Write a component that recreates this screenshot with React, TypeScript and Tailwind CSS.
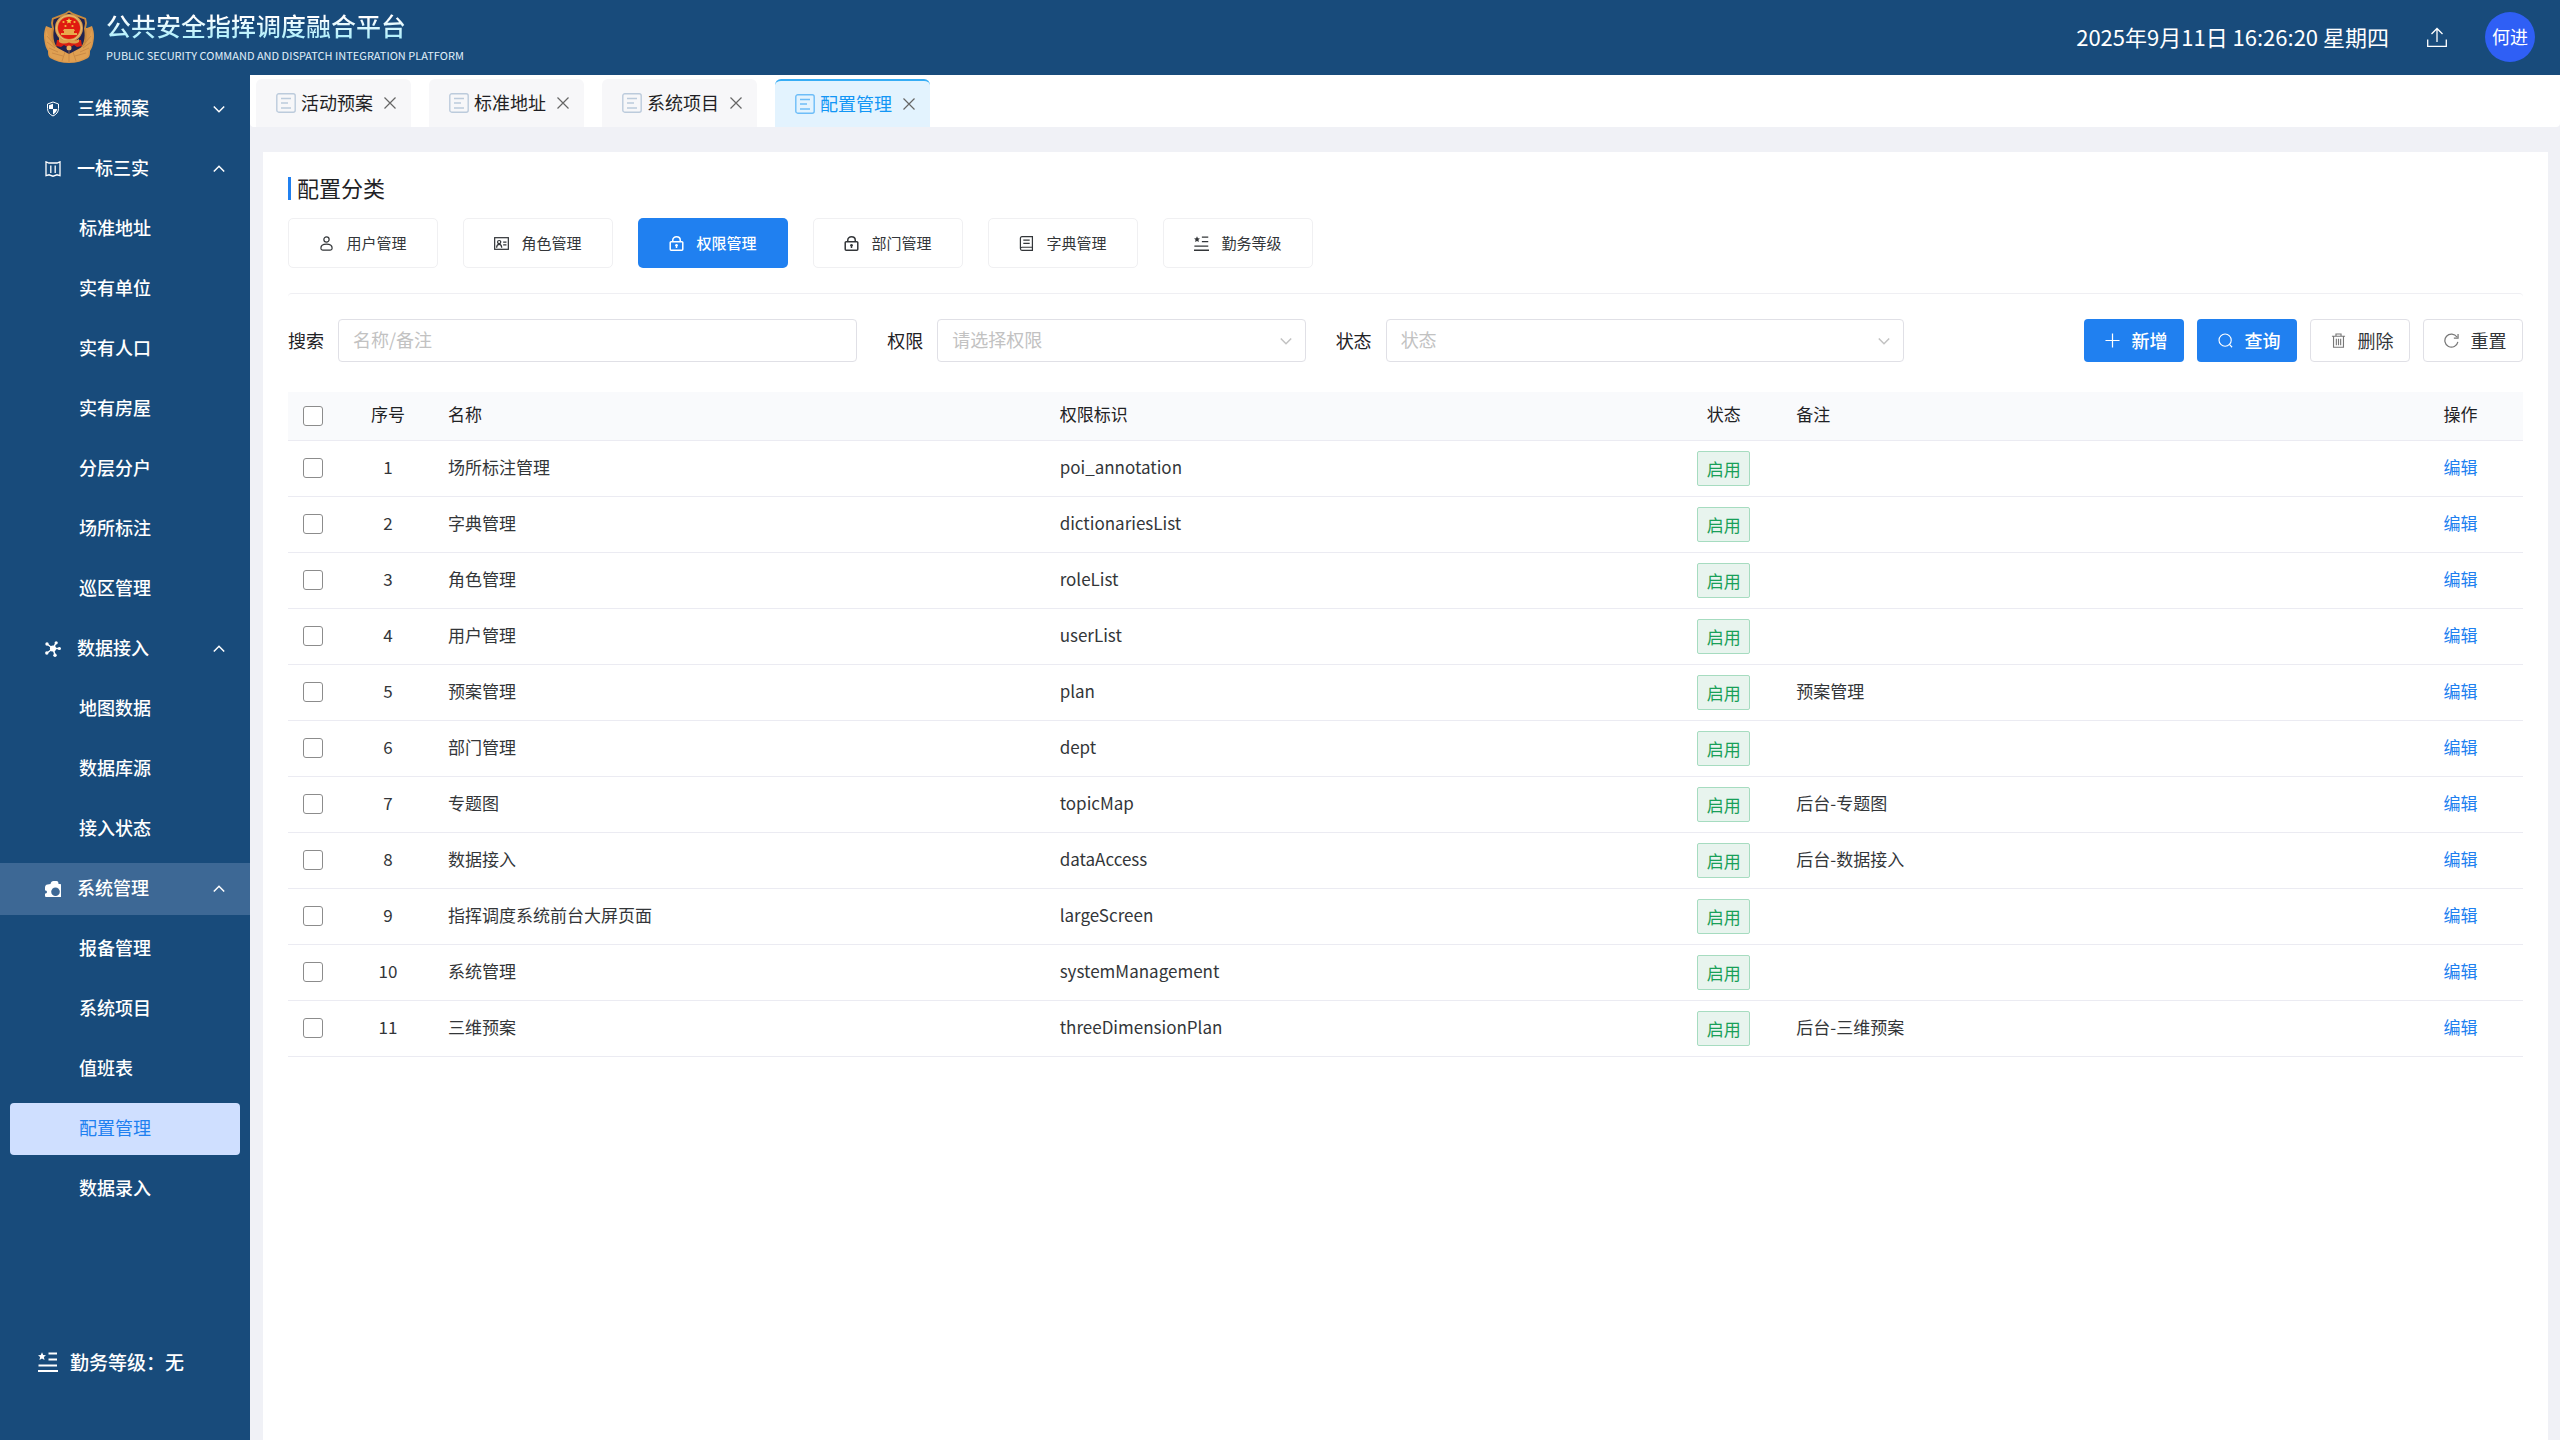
import type { ReactNode } from 'react'
import clsx from 'clsx'

type IconProps = { className?: string }

function Emblem({ className }: IconProps) {
  return (
    <svg viewBox="0 0 50 53" className={className} aria-hidden="true">
      <path d="M2 16c-2 5-2.500 10-1.500 15 .5 4 1.500 7 3.500 10 0 3 0 5 2 7 5 3 12 5 19 5s14-2 19-5c2-2 2-4 2-7 2-3 3-6 3.500-10 1-5 .5-10-1.500-15l-5 2H7z" fill="#d9964a" />
      <path d="M25 0.500 29 3l13 5 1 5-1 5c2 12-1 20-6 24l-11 6-11-6C9 38 6 30 8 18l-1-5 1-5 13-5z" fill="#c98a3e" />
      <path d="M25 2.500 29 5l11.500 4.500.5 4-1 5c2 10-1 18-5.500 21.500L25 45l-9.500-5C11 36.500 8 28.500 10 18.500l-1-5 .5-4L21 5z" fill="#1f2350" />
      <path d="M2 20c3 6 4 12 8 16l15 8 15-8c4-4 5-10 8-16 1 8 0 15-3 20-1 3 0 5-2 7-5 3-11 5-18 5s-13-2-18-5c-2-2-1-4-2-7-3-5-4-12-3-20z" fill="#e0a052" />
      <path d="M3 26l6 7M3 32l8 6M5 38l9 4M8 43l11 3M47 26l-6 7M47 32l-8 6M45 38l-9 4M42 43l-11 3M25 41v11M21 42l-3 9M29 42l3 9" stroke="#c08040" strokeWidth="0.700" />
      <path d="M13 30h24l1 6-5 1-3-2-5 3-5-3-3 2-5-1z" fill="#d81e12" />
      <circle cx="25" cy="18" r="14" fill="#d49a4c" />
      <circle cx="25" cy="18" r="12.500" fill="none" stroke="#f0bd72" strokeWidth="1" />
      <circle cx="25" cy="18" r="11" fill="#e01a10" />
      <path d="M25 8l.9 1.900 2.100.2-1.600 1.400.5 2.100-1.900-1.100-1.900 1.100.5-2.100L22 10.100l2.100-.2z" fill="#f5cf4e" />
      <circle cx="19.500" cy="12" r="1.100" fill="#f5b93e" />
      <circle cx="30.500" cy="12" r="1.100" fill="#f5b93e" />
      <circle cx="21.500" cy="16" r="1.100" fill="#f5b93e" />
      <circle cx="28.500" cy="16" r="1.100" fill="#f5b93e" />
      <path d="M20 19h10l1 2h-1v2h3v2H17v-2h3v-2h-1z" fill="#e8a94c" />
      <path d="M15 27c3 4 7 4 10 2 3 2 7 2 10 0v3c-3 2-7 2-10 .5-3 1.500-7 1.500-10-.5z" fill="#dda04c" />
      <circle cx="25" cy="38" r="2.500" fill="#e9b060" />
    </svg>
  )
}

function ShieldIcon({ className }: IconProps) {
  return (
    <svg viewBox="0 0 16 16" className={className} aria-hidden="true">
      <path d="M8 1 13.500 3v4.500c0 3.500-2.200 6-5.500 7.500-3.300-1.500-5.500-4-5.500-7.500V3z" fill="none" stroke="currentColor" strokeWidth="1" />
      <path d="M8 2.800V8H4V4.200zM8 8h4.200c-.4 2.600-2 4.400-4.200 5.600z" fill="currentColor" />
    </svg>
  )
}

function MapIcon({ className }: IconProps) {
  return (
    <svg viewBox="0 0 16 16" className={className} fill="none" stroke="currentColor" strokeWidth="1.300" aria-hidden="true">
      <path d="M1 .8 4 2h8l3-1.200v13.800l-3-.8-4 1.400-4-1.400-3 .8z" />
      <path d="M5.800 4.500v7.500M10.200 4.500v7.500" />
    </svg>
  )
}

function HubIcon({ className }: IconProps) {
  return (
    <svg viewBox="0 0 16 16" className={className} fill="currentColor" aria-hidden="true">
      <path d="M8 7.500 2 3M8 7.500 11 1.800M8 7.500h6.500M8 7.500 2 12M8 7.500l2 6.500" stroke="currentColor" strokeWidth="1.500" />
      <circle cx="8" cy="7.500" r="3.100" />
      <circle cx="2" cy="3" r="1.700" />
      <circle cx="11.200" cy="1.800" r="1.600" />
      <circle cx="14.400" cy="7.500" r="1.600" />
      <circle cx="1.800" cy="12" r="1.700" />
      <circle cx="10" cy="14.200" r="1.700" />
    </svg>
  )
}

function SystemIcon({ className }: IconProps) {
  return (
    <svg viewBox="0 0 16 16" className={className} aria-hidden="true">
      <path d="M5.500 3c.3-2 1.500-3 3-3h3c1.500 0 2 1 2 3h1.500c1 0 1 .5 1 1.500V16H1.500C.5 16 0 15.500 0 14.500v-2c1.500 0 2-.6 2-1.500s-.5-1.500-2-1.500v-3C0 5 .8 3.500 2.500 3.500z" fill="currentColor" />
      <circle cx="10.500" cy="10.800" r="4.300" fill="#3d6895" />
    </svg>
  )
}

function LevelIcon({ className }: IconProps) {
  return (
    <svg viewBox="0 0 20 20" className={className} aria-hidden="true">
      <path d="M4 0.300 5.200 2.900l2.800.3-2.100 1.900.6 2.900L4 6.500 1.500 8l.6-2.900L0 3.200l2.800-.3z" fill="currentColor" />
      <path d="M10.500 1.500H19M10.500 7.500H19M.5 13.500h18.500M0 19h20" stroke="currentColor" strokeWidth="1.800" />
    </svg>
  )
}

function UserIcon({ className }: IconProps) {
  return (
    <svg viewBox="0 0 16 16" className={className} fill="none" stroke="currentColor" strokeWidth="1.300" aria-hidden="true">
      <circle cx="8" cy="3.700" r="2.800" />
      <path d="M8 8.700c3.500 0 6 1.800 6 4.300 0 1.400-.8 2-2 2H4c-1.200 0-2-.6-2-2 0-2.500 2.500-4.300 6-4.300z" />
    </svg>
  )
}

function RoleIcon({ className }: IconProps) {
  return (
    <svg viewBox="0 0 16 16" className={className} fill="none" stroke="currentColor" strokeWidth="1.300" aria-hidden="true">
      <rect x="0.700" y="1.800" width="14.600" height="12.400" />
      <circle cx="5.500" cy="6.500" r="1.700" />
      <path d="M2.800 12.500c0-2 1-3.500 2.700-3.500s2.700 1.500 2.700 3.500M9.800 6.500h3.500M9.800 9.500h3.500" />
    </svg>
  )
}

function LockIcon({ className }: IconProps) {
  return (
    <svg viewBox="0 0 16 16" className={className} fill="none" stroke="currentColor" strokeWidth="1.600" aria-hidden="true">
      <rect x="1.300" y="6" width="13.400" height="9.200" rx="1" />
      <path d="M4 6V4.500C4 2.300 5.700.8 8 .8s4 1.500 4 3.700V6" />
      <path d="M8 9.800v3" />
      <circle cx="8" cy="9.800" r="1.400" fill="currentColor" stroke="none" />
    </svg>
  )
}

function BookIcon({ className }: IconProps) {
  return (
    <svg viewBox="0 0 16 16" className={className} fill="none" stroke="currentColor" strokeWidth="1.300" aria-hidden="true">
      <path d="M14.300 12V.7H3.200C2.200.7 1.500 1.400 1.500 2.400v11c0 1 .7 1.900 1.700 1.900h11.100V12H3.200c-1 0-1.700.7-1.700 1.600M4.600 4.300h6.800M4.600 7.800h6.800" />
    </svg>
  )
}

function PageIcon({ className }: IconProps) {
  return (
    <svg viewBox="0 0 20 20" className={className} fill="none" stroke="currentColor" strokeWidth="1.400" aria-hidden="true">
      <rect x="0.800" y="0.800" width="18.400" height="18.400" rx="2" />
      <path d="M5 5.500h10M5 10h7M5 15h10" />
    </svg>
  )
}

function CloseIcon({ className }: IconProps) {
  return (
    <svg viewBox="0 0 12 12" className={className} stroke="currentColor" strokeWidth="1.200" aria-hidden="true">
      <path d="M.5.5l11 11M11.500.5l-11 11" />
    </svg>
  )
}

function Chevron({ className }: IconProps) {
  return (
    <svg viewBox="0 0 12 12" className={className} fill="none" stroke="currentColor" strokeWidth="1.500" aria-hidden="true">
      <path d="M.8 3.500 6 8.700l5.200-5.200" />
    </svg>
  )
}

function UploadIcon({ className }: IconProps) {
  return (
    <svg viewBox="0 0 20 20" className={className} fill="none" stroke="currentColor" strokeWidth="1.300" aria-hidden="true">
      <path d="M10 15V1.500M4.500 7 10 1.500 15.500 7M.7 12.500v6.800h18.600v-6.800" />
    </svg>
  )
}

function PlusIcon({ className }: IconProps) {
  return (
    <svg viewBox="0 0 16 16" className={className} stroke="currentColor" strokeWidth="1.300" aria-hidden="true">
      <path d="M8 .5v15M.5 8h15" />
    </svg>
  )
}

function SearchIcon({ className }: IconProps) {
  return (
    <svg viewBox="0 0 16 16" className={className} fill="none" stroke="currentColor" strokeWidth="1.200" aria-hidden="true">
      <circle cx="7.600" cy="7.600" r="6.500" />
      <path d="m12.200 12.200 2.800 3" />
    </svg>
  )
}

function TrashIcon({ className }: IconProps) {
  return (
    <svg viewBox="0 0 16 16" className={className} fill="none" stroke="currentColor" strokeWidth="1.200" aria-hidden="true">
      <path d="M1 3.500h14M5.300 3.300V1h5.400v2.300M2.700 3.500v11.700h10.600V3.500M5.700 6v7M8 6v7M10.300 6v7" />
    </svg>
  )
}

function ResetIcon({ className }: IconProps) {
  return (
    <svg viewBox="0 0 16 16" className={className} fill="none" stroke="currentColor" strokeWidth="1.300" aria-hidden="true">
      <path d="M14.800 9.500A7 7 0 1 1 13.800 4.300M15 1v4.500h-4.500" />
    </svg>
  )
}

type MenuGroup = {
  label: string
  icon: ReactNode
  open: boolean
  active?: boolean
  children: string[]
}

const menu: MenuGroup[] = [
  { label: '三维预案', icon: <ShieldIcon className="size-4" />, open: false, children: [] },
  {
    label: '一标三实',
    icon: <MapIcon className="size-4" />,
    open: true,
    children: ['标准地址', '实有单位', '实有人口', '实有房屋', '分层分户', '场所标注', '巡区管理'],
  },
  {
    label: '数据接入',
    icon: <HubIcon className="size-4" />,
    open: true,
    children: ['地图数据', '数据库源', '接入状态'],
  },
  {
    label: '系统管理',
    icon: <SystemIcon className="size-4" />,
    open: true,
    active: true,
    children: ['报备管理', '系统项目', '值班表', '配置管理', '数据录入'],
  },
]

const tabs = ['活动预案', '标准地址', '系统项目', '配置管理']

const categories = [
  { label: '用户管理', icon: <UserIcon className="size-[15px]" /> },
  { label: '角色管理', icon: <RoleIcon className="size-[15px]" /> },
  { label: '权限管理', icon: <LockIcon className="size-[15px]" /> },
  { label: '部门管理', icon: <LockIcon className="size-[15px]" /> },
  { label: '字典管理', icon: <BookIcon className="size-[15px]" /> },
  { label: '勤务等级', icon: <LevelIcon className="size-[15px]" /> },
]

const rows = [
  { name: '场所标注管理', key: 'poi_annotation', remark: '' },
  { name: '字典管理', key: 'dictionariesList', remark: '' },
  { name: '角色管理', key: 'roleList', remark: '' },
  { name: '用户管理', key: 'userList', remark: '' },
  { name: '预案管理', key: 'plan', remark: '预案管理' },
  { name: '部门管理', key: 'dept', remark: '' },
  { name: '专题图', key: 'topicMap', remark: '后台-专题图' },
  { name: '数据接入', key: 'dataAccess', remark: '后台-数据接入' },
  { name: '指挥调度系统前台大屏页面', key: 'largeScreen', remark: '' },
  { name: '系统管理', key: 'systemManagement', remark: '' },
  { name: '三维预案', key: 'threeDimensionPlan', remark: '后台-三维预案' },
]

function Header() {
  return (
    <header className="flex h-[75px] items-center bg-[#184b7b] pr-[25px] pb-[2px] pl-11 text-white">
      <Emblem className="h-[53px] w-[50px] shrink-0" />
      <div className="ml-3">
        <h1 className="bg-linear-to-b from-white from-30% to-[#b4f0fc] to-80% bg-clip-text text-[25px] leading-9 font-medium text-transparent">
          公共安全指挥调度融合平台
        </h1>
        <p className="text-[11px] leading-6 text-[#e0f0fa]">PUBLIC SECURITY COMMAND AND DISPATCH INTEGRATION PLATFORM</p>
      </div>
      <time className="ml-auto pb-[2px] text-[22px] leading-8">2025年9月11日 16:26:20 星期四</time>
      <button type="button" aria-label="上传" className="ml-[38px]">
        <UploadIcon className="size-5" />
      </button>
      <button type="button" className="ml-[38px] size-[50px] rounded-full bg-[#2f5ff5] pb-[2px] text-lg leading-none">
        何进
      </button>
    </header>
  )
}

function Sidebar() {
  return (
    <aside className="flex w-[250px] shrink-0 flex-col bg-[#184b7b] pt-2 pb-[50px] text-lg text-white">
      <nav className="flex flex-col gap-2">
        {menu.map((group) => (
          <div key={group.label} className="flex flex-col gap-2">
            <button
              type="button"
              aria-expanded={group.open}
              className={clsx('flex h-[52px] items-center pr-[25px] pl-[45px] font-medium', group.active && 'bg-[#3d6895]')}
            >
              {group.icon}
              <span className="ml-4 pb-1 leading-6">{group.label}</span>
              <Chevron className={clsx('ml-auto size-3', group.open && 'rotate-180')} />
            </button>
            {group.children.map((child) => (
              <a
                key={child}
                href="#"
                className={clsx(
                  'mx-[10px] flex h-[52px] items-center rounded pb-1 pl-[69px] leading-6',
                  child === '配置管理' ? 'bg-[#cfdfff] text-[#2080f0]' : 'font-medium',
                )}
              >
                {child}
              </a>
            ))}
          </div>
        ))}
      </nav>
      <div className="mt-auto flex h-[52px] items-center gap-3 pb-1 pl-[38px] text-[19px] font-medium">
        <LevelIcon className="size-5" />
        勤务等级：无
      </div>
    </aside>
  )
}

function TabBar() {
  return (
    <div className="flex h-[52px] items-end gap-[18px] rounded-b bg-white pl-[6px]">
      {tabs.map((tab) => {
        const active = tab === '配置管理'
        return (
          <div
            key={tab}
            className={clsx(
              'flex h-12 items-center rounded-t-md pr-[15px] pl-5 text-lg',
              active ? 'border-t-2 border-[#36adf5] bg-[#e3f3fe] text-[#1296f5]' : 'bg-[#f7f7f9] text-[#1f1f24]',
            )}
          >
            <PageIcon className={clsx('size-5', active ? 'text-[#6dbdf8]' : 'text-[#bccbdc]')} />
            <a href="#" className="ml-[5px] pb-[2px] leading-6">{tab}</a>
            <button type="button" aria-label={`关闭${tab}`} className="ml-[11px] text-[#666]">
              <CloseIcon className="size-3" />
            </button>
          </div>
        )
      })}
    </div>
  )
}

function SelectField({ id, label, placeholder, className }: { id: string; label: string; placeholder: string; className: string }) {
  return (
    <div className={clsx('flex items-center gap-[14px]', className)}>
      <label htmlFor={id} className="shrink-0 pb-[2px]">{label}</label>
      <div className="relative min-w-0 flex-1">
        <select
          id={id}
          defaultValue=""
          className="block h-[43px] w-full appearance-none rounded border border-[#e0e0e6] bg-white px-[14px] pb-1 leading-6 text-[#c2c2c2]"
        >
          <option value="">{placeholder}</option>
        </select>
        <Chevron className="pointer-events-none absolute top-4 right-[14px] size-3 text-[#c2c2c2]" />
      </div>
    </div>
  )
}

function ActionButton({ icon, primary, children }: { icon: ReactNode; primary?: boolean; children: ReactNode }) {
  return (
    <button
      type="button"
      className={clsx(
        'flex h-[43px] w-[100px] items-center justify-center gap-3 rounded pl-1',
        primary ? 'bg-[#2080f0] font-medium text-white' : 'border border-[#e0e0e6] text-[#333639]',
      )}
    >
      {icon}
      <span className="pb-[2px]">{children}</span>
    </button>
  )
}

function FilterBar() {
  return (
    <div className="flex items-center text-lg leading-6 text-[#1f2225]">
      <form className="flex flex-1 gap-[30px] pr-[180px]">
        <div className="flex flex-[569] items-center gap-[14px]">
          <label htmlFor="keyword" className="shrink-0 pb-[2px]">搜索</label>
          <input
            id="keyword"
            type="text"
            placeholder="名称/备注"
            className="h-[43px] min-w-0 flex-1 rounded border border-[#e0e0e6] px-[14px] pb-1 placeholder:text-[#c2c2c2]"
          />
        </div>
        <SelectField id="permission" label="权限" placeholder="请选择权限" className="flex-[418]" />
        <SelectField id="status" label="状态" placeholder="状态" className="flex-[568]" />
      </form>
      <div className="flex gap-[13px]">
        <ActionButton primary icon={<PlusIcon className="size-[15px]" />}>新增</ActionButton>
        <ActionButton primary icon={<SearchIcon className="size-[15px]" />}>查询</ActionButton>
        <ActionButton icon={<TrashIcon className="size-[15px] text-[#777]" />}>删除</ActionButton>
        <ActionButton icon={<ResetIcon className="size-[15px] text-[#777]" />}>重置</ActionButton>
      </div>
    </div>
  )
}

const checkboxClass = 'block size-5 mx-auto appearance-none rounded-[3px] border border-[#8c8c8c] bg-white'

function PermissionTable() {
  return (
    <table className="mt-[30px] w-full table-fixed border-separate border-spacing-0 text-left text-[17px] leading-6 text-[#333639]">
      <colgroup>
        <col className="w-[50px]" />
        <col className="w-[100px]" />
        <col />
        <col />
        <col className="w-[125px]" />
        <col />
        <col className="w-[125px]" />
      </colgroup>
      <thead>
        <tr className="h-[49px] bg-[#f9fafc] text-[#1f2225] *:border-b *:border-[#ebebf2] *:pb-1 *:font-normal">
          <th className="pt-1"><input type="checkbox" aria-label="全选" className={checkboxClass} /></th>
          <th className="text-center">序号</th>
          <th className="px-[10px]">名称</th>
          <th className="px-[10px]">权限标识</th>
          <th className="text-center">状态</th>
          <th className="px-[10px]">备注</th>
          <th className="text-center">操作</th>
        </tr>
      </thead>
      <tbody>
        {rows.map((row, i) => (
          <tr key={row.key} className="h-14 *:border-b *:border-[#ebebf2]">
            <td className="pb-[2px]"><input type="checkbox" aria-label={row.name} className={checkboxClass} /></td>
            <td className="pb-1 text-center">{i + 1}</td>
            <td className="px-[10px] pb-1">{row.name}</td>
            <td className="px-[10px] pb-1">{row.key}</td>
            <td>
              <span className="mx-auto flex h-[35px] w-[53px] items-center justify-center rounded-xs border border-[#a6dcc0] bg-[#e8f4ee] text-[#18a058]">
                启用
              </span>
            </td>
            <td className="px-[10px] pb-1">{row.remark}</td>
            <td className="pb-1 text-center">
              <a href="#" className="text-[#2080f0]">编辑</a>
            </td>
          </tr>
        ))}
      </tbody>
    </table>
  )
}

export default function App() {
  return (
    <div className="flex min-h-screen flex-col bg-[#f0f1f6] font-['Noto_Sans_CJK_SC','Noto_Sans',sans-serif]">
      <Header />
      <div className="flex flex-1">
        <Sidebar />
        <main className="flex min-w-0 flex-1 flex-col">
          <TabBar />
          <section className="mt-[25px] mr-3 ml-[13px] flex-1 bg-white p-[25px]">
            <div className="flex h-[23px] items-center gap-[6px]">
              <span className="h-[23px] w-[3px] bg-[#2080f0]" />
              <h2 className="pb-[2px] text-[22px] leading-[23px] text-[#1f2225]">配置分类</h2>
            </div>
            <div className="mt-[18px] flex gap-[25px]">
              {categories.map((c) => (
                <button
                  key={c.label}
                  type="button"
                  className={clsx(
                    'flex h-[50px] w-[150px] items-center justify-center gap-3 rounded-[5px] text-[15px]',
                    c.label === '权限管理' ? 'bg-[#2080f0] font-medium text-white' : 'border border-[#f0f0f2] text-[#333639]',
                  )}
                >
                  {c.icon}
                  {c.label}
                </button>
              ))}
            </div>
            <div className="mt-[25px] rounded border-t border-[#efeff3] pt-[25px]">
              <FilterBar />
              <PermissionTable />
            </div>
          </section>
        </main>
      </div>
    </div>
  )
}
